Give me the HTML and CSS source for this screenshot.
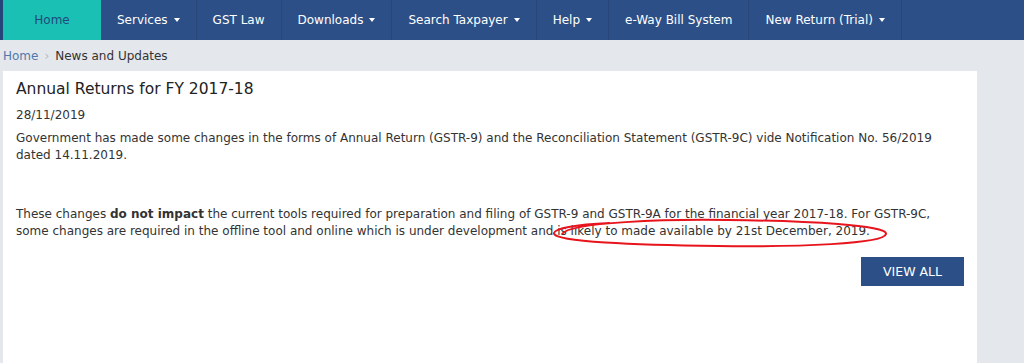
FILE: index.html
```html
<!DOCTYPE html>
<html lang="en">
<head>
    <meta charset="UTF-8">
    <title>News and Updates</title>
    <link rel="stylesheet" href="styles.css">
</head>
<body>
    <nav class="topnav">
        <a class="nav-item active" href="#">Home</a>
        <a class="nav-item" href="#">Services <span class="caret"></span></a>
        <a class="nav-item" href="#">GST Law</a>
        <a class="nav-item" href="#">Downloads <span class="caret"></span></a>
        <a class="nav-item" href="#">Search Taxpayer <span class="caret"></span></a>
        <a class="nav-item" href="#">Help <span class="caret"></span></a>
        <a class="nav-item" href="#">e-Way Bill System</a>
        <a class="nav-item last" href="#">New Return (Trial) <span class="caret"></span></a>
    </nav>

    <div class="breadcrumb">
        <a href="#">Home</a>
        <span class="sep">&rsaquo;</span>
        <span>News and Updates</span>
    </div>

    <div class="page">
        <div class="card">
            <h2>Annual Returns for FY 2017-18</h2>
            <p class="date">28/11/2019</p>
            <p>Government has made some changes in the forms of Annual Return (GSTR-9) and the Reconciliation Statement (GSTR-9C) vide Notification No. 56/2019 dated 14.11.2019.</p>
            <p class="gap">These changes <b>do not impact</b> the current tools required for preparation and filing of GSTR-9 and GSTR-9A for the financial year 2017-18. For GSTR-9C, some changes are required in the offline tool and online which is under development and is likely to made available by 21st December, 2019.</p>
            <div class="actions">
                <button class="view-all">VIEW ALL</button>
            </div>

            <svg class="marker" width="350" height="34" viewBox="0 0 350 34">
                <path d="M14 17 C 22 5, 120 2, 180 3 C 260 4, 340 8, 338 17 C 336 27, 250 30, 170 29 C 90 28, 4 25, 6 16 C 8 10, 40 7, 62 6" fill="none" stroke="#e8141c" stroke-width="2"/>
            </svg>
        </div>
        <div class="side"></div>
    </div>
</body>
</html>
```

FILE: styles.css
```css
body {
    margin: 0;
    font-family: "DejaVu Sans", Verdana, sans-serif;
    font-size: 12px;
    color: #333;
    background-color: #e4e7eb;
    height: 363px;
    overflow: hidden;
}

.topnav {
    display: flex;
    height: 40px;
    background-color: #2c4f87;
    border-left: 3px solid #25467a;
}

.nav-item {
    display: flex;
    align-items: center;
    gap: 6px;
    padding: 0 16px;
    color: #fff;
    font-size: 12px;
    text-decoration: none;
    border-right: 1px solid #284778;
}

.nav-item.active {
    background-color: #1bc0b4;
    color: #1f4a7c;
    width: 98px;
    box-sizing: border-box;
    justify-content: center;
    padding: 0;
    border-right: none;
}

.caret {
    width: 0;
    height: 0;
    border-left: 3.5px solid transparent;
    border-right: 3.5px solid transparent;
    border-top: 4px solid #fff;
}

.breadcrumb {
    height: 31px;
    display: flex;
    align-items: center;
    padding-left: 3px;
    gap: 6px;
    font-size: 12px;
}

.breadcrumb a {
    color: #5179ad;
    text-decoration: none;
}

.breadcrumb .sep {
    color: #bbb;
}

.page {
    display: flex;
    height: 292px;
}

.card {
    position: relative;
    width: 974px;
    margin-left: 3px;
    background: #fff;
    padding: 7px 13px 0;
    box-sizing: border-box;
}

.side {
    flex: 1;
}

h2 {
    font-size: 15.5px;
    font-weight: normal;
    margin: 0 0 7px;
    line-height: 22px;
    color: #222;
}

p {
    margin: 0 0 8px;
    line-height: 17px;
}

.date {
    margin-bottom: 6px;
}

p.gap {
    margin-top: 42px;
}

.actions {
    display: flex;
    justify-content: flex-end;
    margin-top: 17px;
}

.view-all {
    width: 103px;
    height: 29px;
    border: none;
    background-color: #2c4f87;
    color: #fff;
    font-family: "DejaVu Sans", Verdana, sans-serif;
    font-size: 12.5px;
    cursor: pointer;
}

.marker {
    position: absolute;
    left: 545px;
    top: 146px;
}
```
